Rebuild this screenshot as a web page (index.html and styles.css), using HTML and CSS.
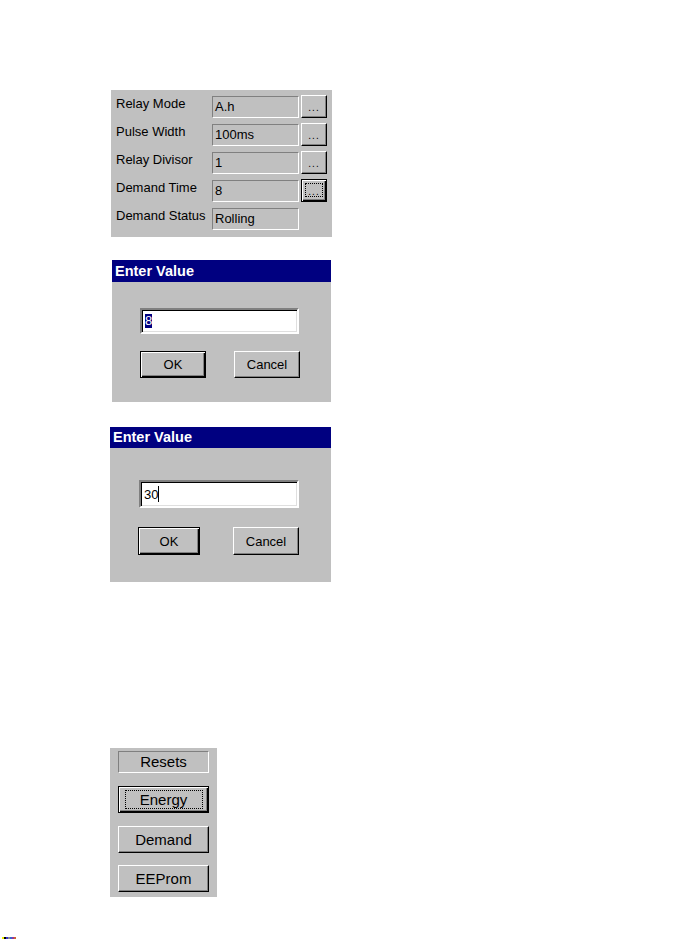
FILE: index.html
```html
<!DOCTYPE html>
<html>
<head>
    <meta charset="utf8"/>
    <link rel="stylesheet" href="styles.css">
</head>
<body>
<div class="page">
    <!-- 继电器设置 -->
    <div class="panel settings">
        <div class="row">
            <span class="label">Relay Mode</span>
            <span class="field">A.h</span>
            <button type="button" class="btn dots">...</button>
        </div>
        <div class="row">
            <span class="label">Pulse Width</span>
            <span class="field">100ms</span>
            <button type="button" class="btn dots">...</button>
        </div>
        <div class="row">
            <span class="label">Relay Divisor</span>
            <span class="field">1</span>
            <button type="button" class="btn dots">...</button>
        </div>
        <div class="row">
            <span class="label">Demand Time</span>
            <span class="field">8</span>
            <button type="button" class="btn dots focused"><span class="focus">...</span></button>
        </div>
        <div class="row">
            <span class="label">Demand Status</span>
            <span class="field">Rolling</span>
        </div>
    </div>

    <!-- 输入框 1 -->
    <div class="dialog d1">
        <div class="title">Enter Value</div>
        <div class="body">
            <div class="edit"><span class="sel">8</span></div>
            <div class="buttons">
                <button type="button" class="btn default">OK</button>
                <button type="button" class="btn">Cancel</button>
            </div>
        </div>
    </div>

    <!-- 输入框 2 -->
    <div class="dialog d2">
        <div class="title">Enter Value</div>
        <div class="body">
            <div class="edit">30<span class="caret"></span></div>
            <div class="buttons">
                <button type="button" class="btn default">OK</button>
                <button type="button" class="btn">Cancel</button>
            </div>
        </div>
    </div>

    <!-- 复位 -->
    <div class="panel resets">
        <div class="caption">Resets</div>
        <button type="button" class="btn default"><span class="focus">Energy</span></button>
        <button type="button" class="btn">Demand</button>
        <button type="button" class="btn">EEProm</button>
    </div>
</div>
<div class="strip"></div>
</body>
</html>
```

FILE: styles.css
```css
body {
    margin: 0;
    background: #fff;
    font-family: "Liberation Sans", Arial, sans-serif;
    font-size: 13px;
    color: #000;
}

.page {
    display: flex;
    flex-direction: column;
    align-items: flex-start;
    padding: 90px 0 0 110px;
}

.panel, .dialog {
    background: #c0c0c0;
    box-sizing: border-box;
}

/* buttons */
.btn {
    box-sizing: border-box;
    margin: 0;
    padding: 0;
    background: #c0c0c0;
    border: 1px solid;
    border-color: #fff #000 #000 #fff;
    box-shadow: inset -1px -1px #808080;
    font-family: inherit;
    font-size: 13px;
    color: #000;
    outline: 0;
    display: flex;
    align-items: center;
    justify-content: center;
}

.btn.default, .btn.focused {
    border: 1px solid #000;
    box-shadow: inset 1px 1px #fff, inset -1px -1px #000, inset -2px -2px #808080;
}

.focus {
    border: 1px dotted #000;
    box-sizing: border-box;
}

/* settings */
.settings {
    margin-left: 1px;
    width: 221px;
    padding: 6px 5px 7px 5px;
    display: flex;
    flex-direction: column;
    gap: 6px;
}

.row {
    display: flex;
    height: 22px;
    gap: 2px;
}

.label {
    width: 94px;
    line-height: 15px;
    white-space: nowrap;
}

.field {
    box-sizing: border-box;
    width: 87px;
    height: 22px;
    border: 1px solid;
    border-color: #808080 #fff #fff #808080;
    padding-left: 2px;
    line-height: 20px;
}

.dots {
    width: 26px;
    height: 23px;
    margin-top: -1px;
    font-size: 10px;
    align-items: flex-end;
    padding-bottom: 4px;
    letter-spacing: 1px;
}

.dots.focused {
    align-items: stretch;
    padding: 3px 3px 4px 3px;
}

.dots .focus {
    width: 100%;
    display: flex;
    align-items: flex-end;
    justify-content: center;
    line-height: 8px;
}

/* dialogs */
.dialog {
    width: 219px;
}

.d1 {
    margin: 23px 0 0 2px;
}

.d2 {
    width: 221px;
    margin-top: 25px;
}

.title {
    background: #000080;
    color: #fff;
    font-weight: bold;
    font-size: 14.5px;
    height: 22px;
    line-height: 22px;
    padding-left: 3px;
}

.d2 .title {
    height: 21px;
    line-height: 21px;
}

.body {
    display: flex;
    flex-direction: column;
    align-items: flex-start;
    padding: 26px 0 24px 28px;
    gap: 17px;
}

.d2 .body {
    padding: 32px 0 27px 28px;
    gap: 19px;
}

.edit {
    box-sizing: border-box;
    width: 159px;
    height: 26px;
    background: #fff;
    border: 2px solid;
    border-color: #808080 #fff #fff #808080;
    box-shadow: inset 1px 1px #000, inset -1px -1px #dfdfdf;
    padding-left: 3px;
    display: flex;
    align-items: center;
}

.d2 .edit {
    width: 160px;
    height: 28px;
    margin-left: 1px;
}

.sel {
    background: #000080;
    color: #fff;
    line-height: 14px;
}

.caret {
    width: 1px;
    height: 16px;
    background: #000;
}

.buttons {
    display: flex;
    gap: 28px;
}

.buttons .btn {
    width: 66px;
    height: 27px;
}

.d2 .buttons {
    gap: 33px;
}

.d2 .buttons .btn {
    height: 28px;
}

.d2 .buttons .default {
    width: 62px;
}

/* resets */
.resets {
    width: 107px;
    margin-top: 166px;
    padding: 3px 8px 5px 8px;
    display: flex;
    flex-direction: column;
    gap: 13px;
    font-size: 15px;
}

.caption {
    box-sizing: border-box;
    width: 91px;
    height: 22px;
    border: 1px solid;
    border-color: #808080 #fff #fff #808080;
    text-align: center;
    line-height: 20px;
}

.resets .btn {
    width: 91px;
    height: 27px;
    font-size: 15px;
}

.resets .btn:last-child {
    margin-top: -1px;
}

.resets .focus {
    width: 78px;
    height: 19px;
    line-height: 17px;
    text-align: center;
}

.strip {
    margin: 40px 0 0 2px;
    width: 14px;
    height: 2px;
    background: linear-gradient(to right, #ee0 0 2px, #000 2px 4px, #33c 4px 6px, #888 6px 8px, #36c 8px 10px, #939 10px 12px, #c63 12px 14px);
}
```
